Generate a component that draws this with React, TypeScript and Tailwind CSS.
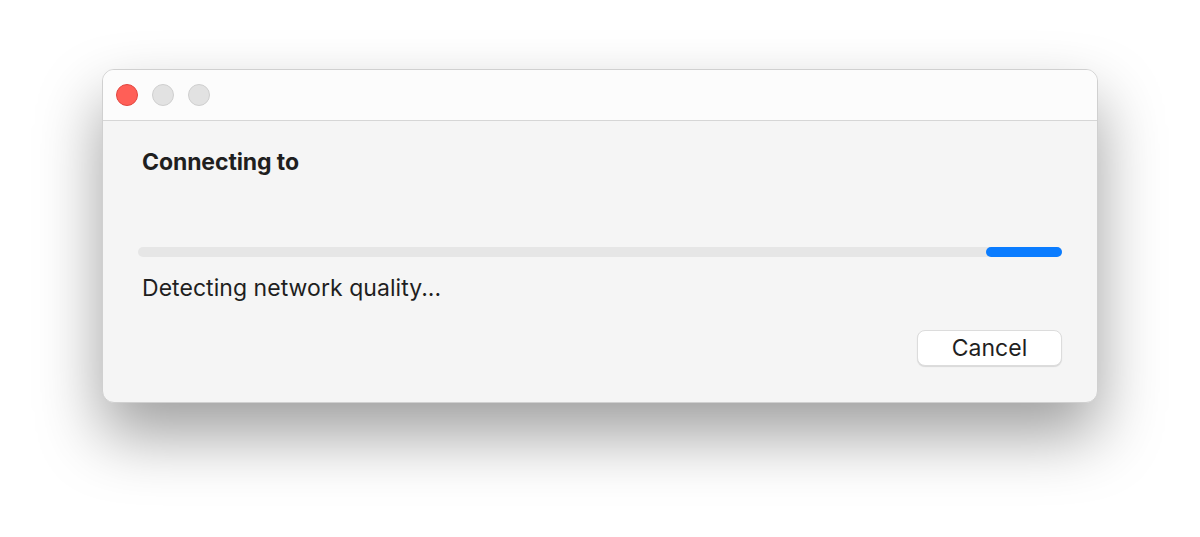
export default function App() {
  return (
    <div
      className="w-[1200px] h-[537px] bg-white overflow-hidden pt-[69px] pl-[102px]"
      style={{ fontFamily: "Inter, 'Liberation Sans', sans-serif" }}
    >
      <div className="w-[996px] h-[334px] rounded-[12px] bg-[#f5f5f5] border border-[#d0d0d0] shadow-[0_32px_64px_rgba(0,0,0,0.38)] overflow-hidden flex flex-col">
        <div className="h-[51px] bg-[#fcfcfc] border-b border-[#d6d6d6] flex items-center gap-[14px] pl-[13px] shrink-0">
          <span className="w-[22px] h-[22px] rounded-full bg-[#ff5f57] border border-[#e2463f]" />
          <span className="w-[22px] h-[22px] rounded-full bg-[#e2e2e2] border border-[#cfcfcf]" />
          <span className="w-[22px] h-[22px] rounded-full bg-[#e2e2e2] border border-[#cfcfcf]" />
        </div>
        <div className="flex flex-col px-[35px] pt-[28px]">
          <h1 className="pl-[4px] text-[23px] leading-[26px] font-bold text-[#1f1f1f] tracking-[-0.1px]">
            Connecting to
          </h1>
          <div className="mt-[72px] h-[10px] rounded-full bg-[#e6e6e6] flex justify-end">
            <div className="w-[76px] h-full rounded-full bg-[#0a7cff]" />
          </div>
          <p className="mt-[18px] pl-[4px] text-[23px] leading-[26px] text-[#1f1f1f] tracking-[0.05px]">
            Detecting network quality...
          </p>
          <div className="mt-[29px] flex justify-end">
            <button className="w-[145px] h-[36px] rounded-[8px] bg-white border border-[#dcdcdc] shadow-[0_1px_1px_rgba(0,0,0,0.12)] text-[23px] text-[#1f1f1f] leading-none">
              Cancel
            </button>
          </div>
        </div>
      </div>
    </div>
  );
}
